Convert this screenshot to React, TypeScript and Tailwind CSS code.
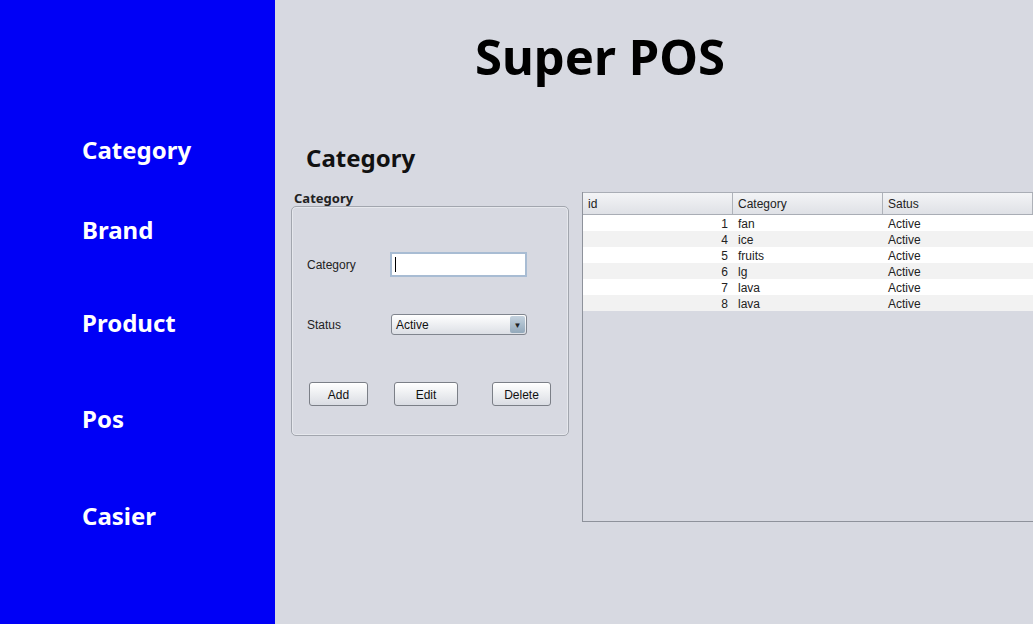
import React from "react";

const navItems = [
  { label: "Category", mt: "mt-0" },
  { label: "Brand", mt: "mt-[50px]" },
  { label: "Product", mt: "mt-[63px]" },
  { label: "Pos", mt: "mt-[66px]" },
  { label: "Casier", mt: "mt-[67px]" },
];

const rows = [
  { id: 1, name: "fan", status: "Active" },
  { id: 4, name: "ice", status: "Active" },
  { id: 5, name: "fruits", status: "Active" },
  { id: 6, name: "lg", status: "Active" },
  { id: 7, name: "lava", status: "Active" },
  { id: 8, name: "lava", status: "Active" },
];

const heavy = "font-['Noto_Sans','DejaVu_Sans',sans-serif] font-bold";
const plain = "font-['Liberation_Sans',Arial,sans-serif] text-[12px]";

function SwingButton({ label, className }: { label: string; className: string }) {
  return (
    <button
      className={`h-[24px] rounded-[3px] border border-[#7b7f87] bg-gradient-to-b from-white to-[#dadde3] pt-px text-[#111] shadow-[inset_0_1px_0_#fff] ${plain} ${className}`}
    >
      {label}
    </button>
  );
}

export default function App() {
  return (
    <div className="flex h-[624px] w-[1033px] overflow-hidden bg-[#d7d9e1]">
      {/* side menu */}
      <aside className="flex w-[275px] shrink-0 flex-col bg-[#0000f6] pl-[82px] pt-[135px]">
        {navItems.map((item) => (
          <div key={item.label} className={`${item.mt} text-[24px] leading-[30px] text-white ${heavy}`}>
            {item.label}
          </div>
        ))}
      </aside>

      {/* main */}
      <main className="flex flex-1 flex-col">
        <h1 className={`ml-[200px] pt-[28px] text-[49px] leading-[56px] text-black ${heavy}`}>Super POS</h1>

        <div className="mt-[59px] flex items-start">
          <div className="ml-[16px] w-[278px] shrink-0">
            <h2 className={`ml-[15px] text-[24px] leading-[30px] text-[#111] ${heavy}`}>Category</h2>
            <div className={`mt-[17px] ml-[3px] text-[13px] leading-[16px] text-[#222] ${heavy}`}>Category</div>

            {/* group box */}
            <div className="h-[230px] rounded-[5px] border border-[#a2a6ae] pt-[45px] shadow-[inset_0_0_0_1px_#e6e8ed]">
              <div className="flex h-[25px] items-center">
                <span className={`ml-[15px] mt-px w-[83px] text-[#222] ${plain}`}>Category</span>
                <div className="flex h-[25px] w-[137px] items-center border-2 border-[#a8bcd3] bg-white pl-[3px]">
                  <span className="h-[15px] w-px bg-black" />
                </div>
              </div>

              <div className="mt-[37px] flex h-[21px] items-center">
                <span className={`ml-[15px] w-[84px] text-[#222] ${plain}`}>Status</span>
                <div className="flex h-[21px] w-[136px] items-center rounded-[3px] border border-[#80858e] bg-gradient-to-b from-white to-[#dcdfe5]">
                  <span className={`flex-1 pl-[4px] text-[#111] ${plain}`}>Active</span>
                  <span className="mr-px flex h-[17px] w-[15px] items-center justify-center rounded-[2px] bg-gradient-to-b from-[#c4d2de] to-[#93a9bb] text-[8px] text-[#222]">
                    ▼
                  </span>
                </div>
              </div>

              <div className="mt-[47px] flex">
                <SwingButton label="Add" className="ml-[17px] w-[59px]" />
                <SwingButton label="Edit" className="ml-[26px] w-[64px]" />
                <SwingButton label="Delete" className="ml-[34px] w-[59px]" />
              </div>
            </div>
          </div>

          {/* table */}
          <div className="ml-[13px] mt-[49px] h-[330px] w-[452px] shrink-0 border-b border-l border-[#8e929b] bg-[#d7d9e1]">
            <div className={`flex h-[23px] border-b border-t border-[#a9adb5] bg-gradient-to-b from-[#f3f4f6] to-[#dfe1e6] text-[#222] ${plain}`}>
              <div className="flex w-[150px] items-center border-r border-[#aeb2b9] pl-[5px]">id</div>
              <div className="flex w-[150px] items-center border-r border-[#aeb2b9] pl-[5px]">Category</div>
              <div className="flex w-[150px] items-center border-r border-[#aeb2b9] pl-[5px]">Satus</div>
            </div>
            {rows.map((r, i) => (
              <div
                key={i}
                className={`flex h-[16px] items-center pt-px text-[#222] ${plain} ${i % 2 === 0 ? "bg-white" : "bg-[#f2f2f2]"}`}
              >
                <div className="w-[150px] pr-[5px] text-right">{r.id}</div>
                <div className="w-[150px] pl-[5px]">{r.name}</div>
                <div className="w-[150px] pl-[5px]">{r.status}</div>
              </div>
            ))}
          </div>
        </div>
      </main>
    </div>
  );
}
